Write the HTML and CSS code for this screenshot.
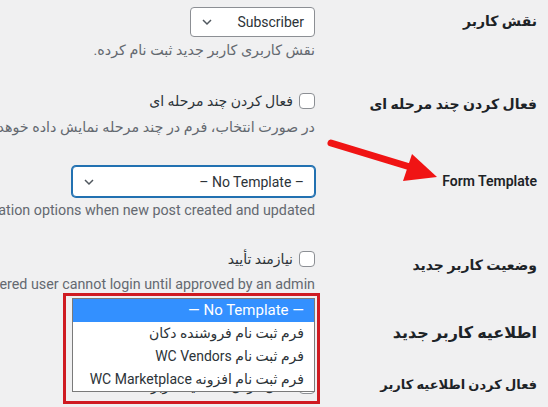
FILE: index.html
```html
<!DOCTYPE html>
<html lang="fa" dir="rtl">
<head>
    <meta charset="UTF-8">
    <meta name="viewport" content="width=device-width, initial-scale=1.0">
    <title>تنظیمات ثبت نام</title>
    <link rel="stylesheet" href="styles.css">
</head>
<body>
    <div class="form-table">
        <!-- نقش کاربر -->
        <div class="row row-role">
            <div class="row-label">نقش کاربر</div>
            <div class="row-field">
                <div class="select select-small">
                    <span class="select-text">Subscriber</span>
                    <svg class="chevron" width="12" height="8" viewBox="0 0 12 8"><polyline points="2,2 6,6 10,2" /></svg>
                </div>
                <p class="description">نقش کاربری کاربر جدید ثبت نام کرده.</p>
            </div>
        </div>

        <!-- چند مرحله ای -->
        <div class="row row-multistep">
            <div class="row-label">فعال کردن چند مرحله ای</div>
            <div class="row-field">
                <label class="check-line"><span class="checkbox"></span>فعال کردن چند مرحله ای</label>
                <p class="description">در صورت انتخاب، فرم در چند مرحله نمایش داده خوهد شد</p>
            </div>
        </div>

        <!-- Form Template -->
        <div class="row row-template">
            <div class="row-label">Form Template</div>
            <div class="row-field">
                <div class="select select-wide focused">
                    <span class="select-text">– No Template –</span>
                    <svg class="chevron" width="12" height="8" viewBox="0 0 12 8"><polyline points="2,2 6,6 10,2" /></svg>
                </div>
                <p class="description">Enable post registration options when new post created and updated</p>
            </div>
        </div>

        <!-- وضعیت کاربر -->
        <div class="row row-status">
            <div class="row-label">وضعیت کاربر جدید</div>
            <div class="row-field">
                <label class="check-line"><span class="checkbox"></span>نیازمند تأیید</label>
                <p class="description description-status">Registered user cannot login until approved by an admin</p>
            </div>
        </div>

        <h2 class="section-title">اطلاعیه کاربر جدید</h2>

        <div class="row row-notify">
            <div class="row-label">فعال کردن اطلاعیه کاربر</div>
            <div class="row-field">
                <label class="check-line"><span class="checkbox"></span>فعال کردن اطلاعیه کاربر</label>
            </div>
        </div>
    </div>

    <!-- فلش راهنما -->
    <svg class="annotation-arrow" width="548" height="407" viewBox="0 0 548 407">
        <line x1="331" y1="143" x2="410" y2="167" />
        <polygon points="412,154 403,181 437,177" />
    </svg>

    <div class="highlight-box"></div>

    <ul class="dropdown-list">
        <li class="selected">— No Template —</li>
        <li>فرم ثبت نام فروشنده دکان</li>
        <li>فرم ثبت نام WC Vendors</li>
        <li>فرم ثبت نام افزونه WC Marketplace</li>
    </ul>
</body>
</html>
```

FILE: styles.css
```css
* {
    margin: 0;
    padding: 0;
    box-sizing: border-box;
}

body {
    font-family: Roboto, "DejaVu Sans", sans-serif;
    background-color: #f0f0f1;
    color: #1d2327;
    width: 548px;
    height: 407px;
    overflow: hidden;
    position: relative;
}

.form-table {
    padding-right: 11px;
}

.row {
    display: flex;
    align-items: flex-start;
}

.row-label {
    width: 212px;
    flex-shrink: 0;
    margin-left: 10px;
    font-size: 14px;
    font-weight: 600;
    line-height: 18px;
    white-space: nowrap;
}

.row-field {
    flex: 1;
    min-width: 0;
    display: flex;
    flex-direction: column;
    align-items: flex-start;
}

.description {
    font-size: 14.3px;
    line-height: 20px;
    color: #646970;
    white-space: nowrap;
    margin-top: 3px;
}

/* ردیف ها */
.row-role {
    padding-top: 7px;
}

.row-role .row-label {
    padding-top: 5px;
}

.row-multistep {
    margin-top: 31px;
}

.row-multistep .row-label {
    padding-top: 4px;
}

.row-multistep .description {
    margin-top: 6px;
}

.row-template {
    margin-top: 29px;
}

.row-template .row-label {
    padding-top: 6px;
}

.row-status {
    margin-top: 29px;
}

.row-status .row-label {
    padding-top: 7px;
}

.row-status .description {
    margin-top: 5px;
}

.section-title {
    font-size: 16px;
    font-weight: 700;
    line-height: 24px;
    margin-top: 27px;
}

.row-notify {
    margin-top: 31px;
}

.row-notify .row-label {
    font-size: 13px;
}

/* سلکت */
.select {
    display: flex;
    align-items: center;
    justify-content: space-between;
    height: 30px;
    background: white;
    border: 1px solid #8c8f94;
    border-radius: 4px;
    padding: 0 10px 0 10px;
    font-size: 14px;
    color: #2c3338;
}

.select-small {
    width: 125px;
}

.select-wide {
    width: 243px;
    height: 31px;
}

.select.focused {
    border-color: #2271b1;
    box-shadow: 0 0 0 1px #2271b1;
}

.select-text {
    direction: ltr;
}

.chevron polyline {
    fill: none;
    stroke: #50575e;
    stroke-width: 1.5;
}

/* چک باکس */
.check-line {
    display: flex;
    align-items: center;
    gap: 6px;
    font-size: 14px;
    line-height: 20px;
    color: #2c3338;
}

.checkbox {
    width: 16px;
    height: 16px;
    background: white;
    border: 1px solid #8c8f94;
    border-radius: 4px;
    flex-shrink: 0;
}

/* فلش راهنما */
.annotation-arrow {
    position: absolute;
    top: 0;
    left: 0;
    pointer-events: none;
}

.annotation-arrow line {
    stroke: #f01414;
    stroke-width: 7;
    stroke-linecap: round;
}

.annotation-arrow polygon {
    fill: #f01414;
}

.highlight-box {
    position: absolute;
    left: 63px;
    top: 293px;
    width: 257px;
    height: 111px;
    border: 3px solid #cf1b22;
}

/* لیست باز شده */
.dropdown-list {
    position: absolute;
    left: 72px;
    top: 298px;
    width: 243px;
    list-style: none;
    background: white;
    border: 1px solid #7a7a7a;
    z-index: 10;
}

.dropdown-list li {
    height: 23px;
    line-height: 23px;
    padding-right: 10px;
    font-size: 14px;
    color: #2c3338;
    white-space: nowrap;
}

.dropdown-list li.selected {
    background-color: #3390ff;
    color: white;
    font-size: 15px;
}
```
